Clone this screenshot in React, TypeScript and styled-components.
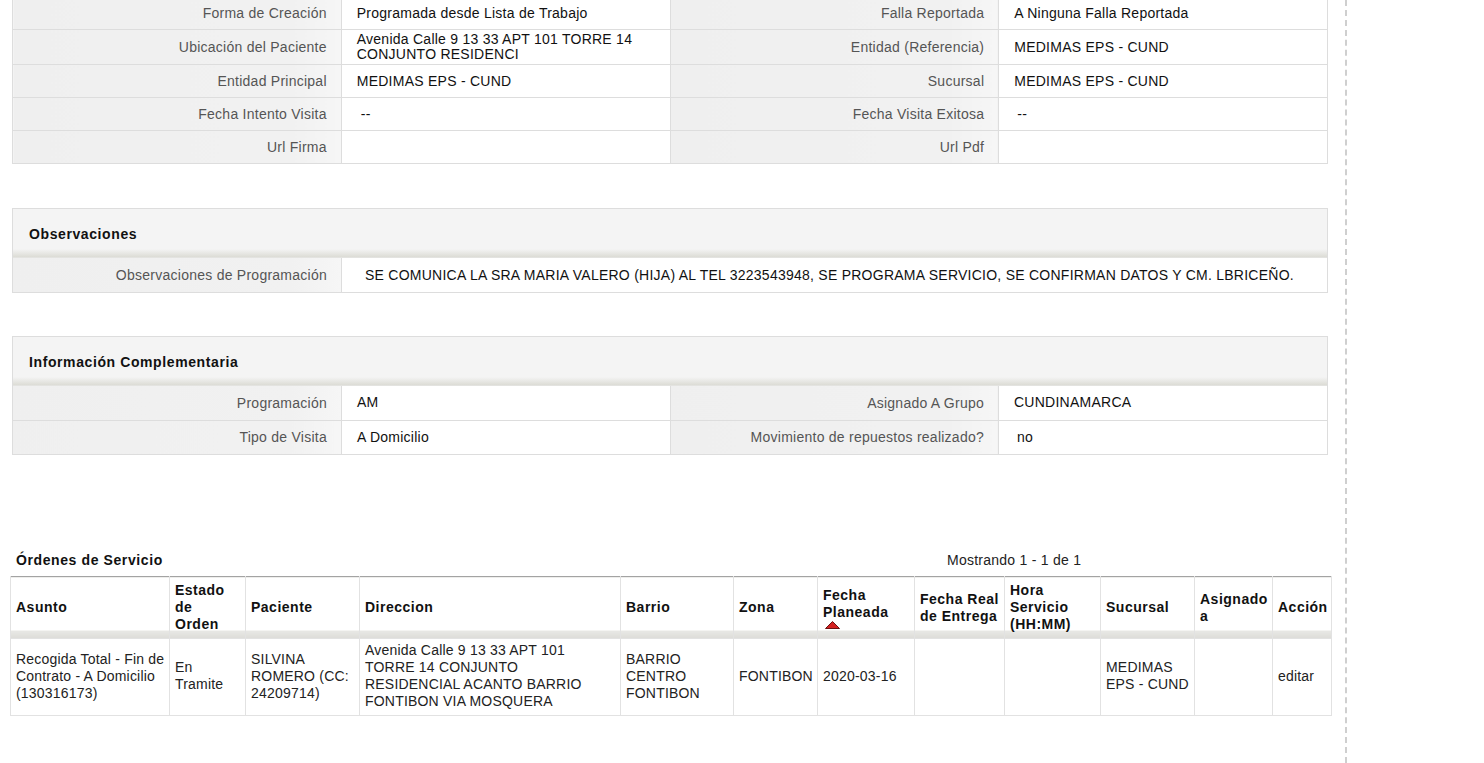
import styled, { createGlobalStyle } from "styled-components";

const GlobalStyle = createGlobalStyle`
  html, body {
    margin: 0;
    padding: 0;
    background: #fff;
  }
  body {
    font-family: "Liberation Sans", Arial, sans-serif;
    font-size: 14px;
    letter-spacing: 0.25px;
    color: #222;
    overflow: hidden;
  }
  * {
    box-sizing: border-box;
  }
`;

type Pair = { label: string; value: string; pad?: number };

const details: [Pair, Pair][] = [
  [
    { label: "Forma de Creación", value: "Programada desde Lista de Trabajo" },
    { label: "Falla Reportada", value: "A Ninguna Falla Reportada" },
  ],
  [
    {
      label: "Ubicación del Paciente",
      value: "Avenida Calle 9 13 33 APT 101 TORRE 14 CONJUNTO RESIDENCI",
    },
    { label: "Entidad (Referencia)", value: "MEDIMAS EPS - CUND" },
  ],
  [
    { label: "Entidad Principal", value: "MEDIMAS EPS - CUND" },
    { label: "Sucursal", value: "MEDIMAS EPS - CUND" },
  ],
  [
    { label: "Fecha Intento Visita", value: "--", pad: 19 },
    { label: "Fecha Visita Exitosa", value: "--", pad: 18 },
  ],
  [
    { label: "Url Firma", value: "" },
    { label: "Url Pdf", value: "" },
  ],
];

const extra: [Pair, Pair][] = [
  [
    { label: "Programación", value: "AM" },
    { label: "Asignado A Grupo", value: "CUNDINAMARCA" },
  ],
  [
    { label: "Tipo de Visita", value: "A Domicilio" },
    { label: "Movimiento de repuestos realizado?", value: "no", pad: 18 },
  ],
];

// header titles keep the line breaks the list shows
const columns = [
  { title: ["Asunto"], width: 159 },
  { title: ["Estado", "de", "Orden"], width: 76 },
  { title: ["Paciente"], width: 114 },
  { title: ["Direccion"], width: 261 },
  { title: ["Barrio"], width: 113 },
  { title: ["Zona"], width: 84 },
  { title: ["Fecha", "Planeada"], width: 97, sorted: true },
  { title: ["Fecha Real", "de Entrega"], width: 90 },
  { title: ["Hora", "Servicio", "(HH:MM)"], width: 96 },
  { title: ["Sucursal"], width: 94 },
  { title: ["Asignado", "a"], width: 78 },
  { title: ["Acción"], width: 59 },
];

const orders = [
  [
    ["Recogida Total - Fin de", "Contrato - A Domicilio", "(130316173)"],
    ["En", "Tramite"],
    ["SILVINA", "ROMERO (CC:", "24209714)"],
    [
      "Avenida Calle 9 13 33 APT 101",
      "TORRE 14 CONJUNTO",
      "RESIDENCIAL ACANTO BARRIO",
      "FONTIBON VIA MOSQUERA",
    ],
    ["BARRIO", "CENTRO", "FONTIBON"],
    ["FONTIBON"],
    ["2020-03-16"],
    [],
    [],
    ["MEDIMAS", "EPS - CUND"],
    [],
    ["editar"],
  ],
];

const Lines = ({ lines }: { lines: string[] }) => (
  <>
    {lines.map((l, i) => (
      <Line key={i}>{l}</Line>
    ))}
  </>
);

const PairRows = ({ rows }: { rows: [Pair, Pair][] }) => (
  <>
    {rows.map((row, i) => (
      <Row key={i}>
        {row.map((p, j) => [
          <Label key={`l${j}`}>{p.label}</Label>,
          <Value key={`v${j}`} $pad={p.pad}>
            {p.value}
          </Value>,
        ])}
      </Row>
    ))}
  </>
);

const SortArrow = () => (
  <svg width="15" height="8" viewBox="0 0 15 8">
    <polygon
      points="7.5,0.5 14.5,7.5 0.5,7.5"
      fill="#d42222"
      stroke="#6b1212"
      strokeWidth="1"
    />
  </svg>
);

export default function App() {
  return (
    <Page>
      <GlobalStyle />
      <Main>
        <DetailTable>
          <tbody>
            <PairRows rows={details} />
          </tbody>
        </DetailTable>

        <Panel $first>
          <PanelHeader>Observaciones</PanelHeader>
          <PanelTable>
            <tbody>
              <Row>
                <Label>Observaciones de Programación</Label>
                <Value colSpan={3} $pad={23}>
                  SE COMUNICA LA SRA MARIA VALERO (HIJA) AL TEL 3223543948, SE
                  PROGRAMA SERVICIO, SE CONFIRMAN DATOS Y CM. LBRICEÑO.
                </Value>
              </Row>
            </tbody>
          </PanelTable>
        </Panel>

        <Panel>
          <PanelHeader>Información Complementaria</PanelHeader>
          <PanelTable>
            <tbody>
              <PairRows rows={extra} />
            </tbody>
          </PanelTable>
        </Panel>

        <OrdersHead>
          <OrdersTitle>Órdenes de Servicio</OrdersTitle>
          <Pager>Mostrando 1 - 1 de 1</Pager>
        </OrdersHead>
        <OrdersTable>
          <colgroup>
            {columns.map((c) => (
              <col key={c.title.join(" ")} style={{ width: c.width }} />
            ))}
          </colgroup>
          <thead>
            <tr>
              {columns.map((c) => (
                <HeadCell key={c.title.join(" ")}>
                  <Lines lines={c.title} />
                  {c.sorted && (
                    <SortIcon>
                      <SortArrow />
                    </SortIcon>
                  )}
                </HeadCell>
              ))}
            </tr>
          </thead>
          <tbody>
            {orders.map((o, i) => (
              <tr key={i}>
                {o.map((cell, j) => (
                  <Cell key={j}>
                    <Lines lines={cell} />
                  </Cell>
                ))}
              </tr>
            ))}
          </tbody>
        </OrdersTable>
      </Main>
      <Rail />
    </Page>
  );
}

const Page = styled.div`
  display: flex;
  min-height: 100vh;
`;

const Main = styled.div`
  width: 1336px;
  padding-left: 10px;
  flex-shrink: 0;
`;

const Rail = styled.div`
  margin-left: 9px;
  border-left: 2px dashed #cfcfcf;
`;

const DetailTable = styled.table`
  width: 1316px;
  margin: -4px 0 0 2px;
  border-collapse: collapse;
  table-layout: fixed;
  border: 1px solid #ddd;

  tr {
    height: 33px;
  }
`;

const Row = styled.tr`
  height: 34px;
`;

const Label = styled.td`
  width: 25%;
  padding: 0 14px 0 8px;
  text-align: right;
  color: #555;
  border: 1px solid #ddd;
  background: linear-gradient(
    to right,
    #efefef 0%,
    #f1f1f1 85%,
    #f6f6f6 100%
  );
  vertical-align: middle;
  white-space: nowrap;
`;

const Value = styled.td<{ $pad?: number }>`
  padding: 2px 10px 2px ${(p) => p.$pad ?? 15}px;
  color: #111;
  line-height: 15px;
  border: 1px solid #ddd;
  background: #fff;
  vertical-align: middle;
`;

const Panel = styled.div<{ $first?: boolean }>`
  width: 1316px;
  margin: ${(p) => (p.$first ? 44 : 43)}px 0 0 2px;
  border: 1px solid #ddd;
`;

const PanelHeader = styled.div`
  height: 49px;
  display: flex;
  align-items: center;
  padding: 0 0 0 16px;
  font-weight: bold;
  letter-spacing: 0.6px;
  color: #111;
  background: linear-gradient(
    to bottom,
    #f4f4f4 0,
    #f4f4f4 40px,
    #e2e2dd 46px,
    #dcdcd6 48px,
    #eaeaea 49px
  );
`;

const PanelTable = styled.table`
  width: 100%;
  border-collapse: collapse;
  border-style: hidden;
  table-layout: fixed;

  tr {
    height: 34px;
  }
`;

const OrdersHead = styled.div`
  display: grid;
  grid-template-columns: 937px 1fr;
  margin-top: 97px;
  padding-bottom: 7px;
  line-height: 17px;
  width: 1321px;
`;

const OrdersTitle = styled.div`
  padding-left: 6px;
  font-weight: bold;
  letter-spacing: 0.6px;
  color: #111;
`;

const Pager = styled.div`
  color: #222;
`;

const OrdersTable = styled.table`
  width: 1321px;
  border-collapse: collapse;
  table-layout: fixed;
  border-top: 1px solid #a3a3a3;
`;

const Line = styled.span`
  display: block;
  white-space: nowrap;
`;

const HeadCell = styled.th`
  padding: 5px 2px 5px 5px;
  text-align: left;
  vertical-align: middle;
  font-weight: bold;
  letter-spacing: 0.5px;
  color: #111;
  line-height: 17px;
  border: 1px solid #e2e2e2;
  border-top: 0;
  background: linear-gradient(
    to bottom,
    #fff 0,
    #fff calc(100% - 8px),
    #e9e9e6 calc(100% - 8px),
    #dddcd8 100%
  );
`;

const SortIcon = styled.span`
  display: block;
  height: 8px;
  margin-left: 2px;
  line-height: 0;
`;

const Cell = styled.td`
  padding: 3px 2px 5px 5px;
  vertical-align: middle;
  line-height: 17px;
  letter-spacing: 0.2px;
  color: #222;
  border: 1px solid #e2e2e2;
  height: 77px;
`;
